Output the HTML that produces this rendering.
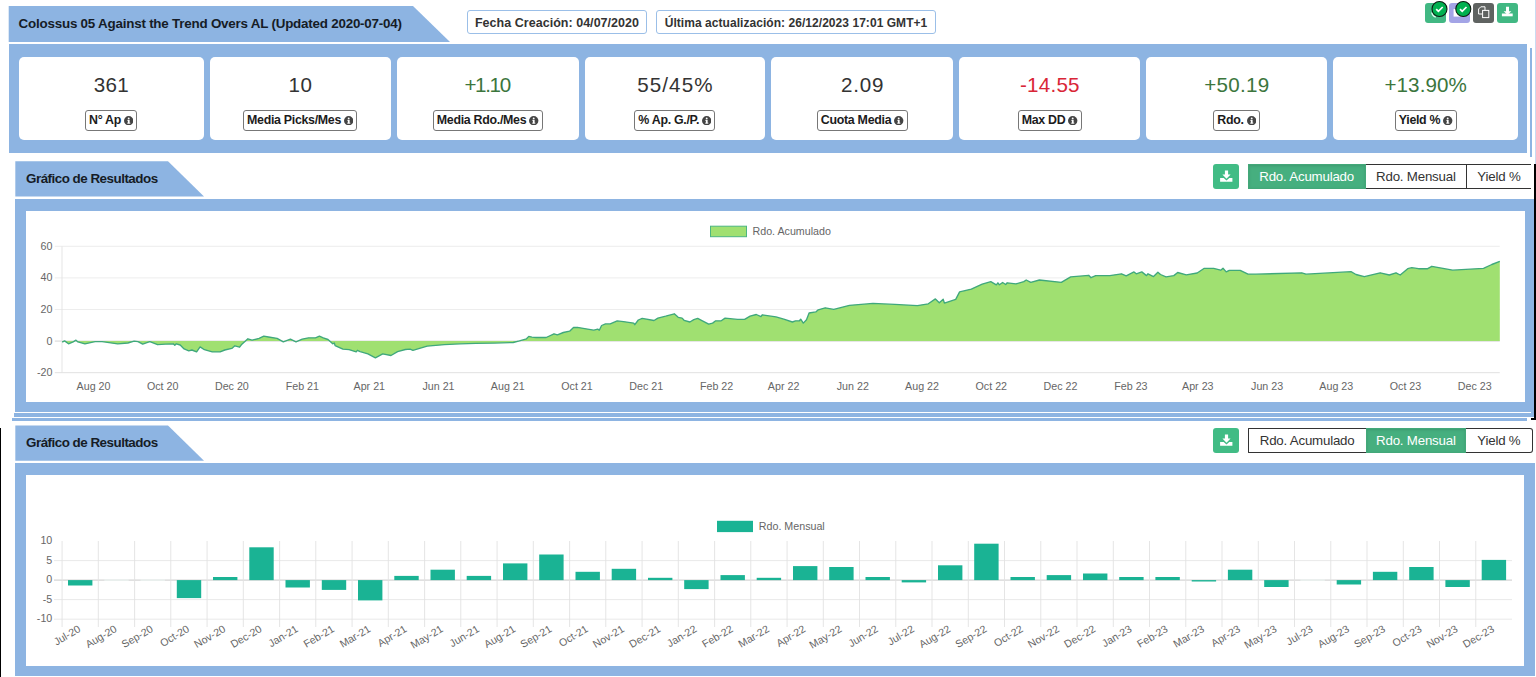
<!DOCTYPE html>
<html><head><meta charset="utf-8"><title>Colossus 05</title>
<style>
html,body{margin:0;padding:0;background:#fff;}
body{width:1536px;height:677px;position:relative;overflow:hidden;font-family:"Liberation Sans",sans-serif;color:#333;}
.abs{position:absolute;}
.blue{background:#8db4e2;}
.card{position:absolute;top:57px;height:83px;background:#fff;border-radius:5px;}
.num{position:absolute;left:0;right:0;top:16px;text-align:center;font-size:20.6px;line-height:24px;color:#333;letter-spacing:0.35px;}
.lblw{position:absolute;left:0;right:0;top:53px;text-align:center;height:20.5px;}
.lbl{display:inline-block;box-sizing:border-box;height:20.5px;border:1px solid #777;border-radius:3px;padding:0 3px;font-weight:bold;font-size:12.4px;line-height:19.4px;color:#1c1c1c;white-space:nowrap;letter-spacing:-0.3px;}
.lbl svg{vertical-align:-1px;margin-left:3px;}
.tabtxt{position:absolute;font-weight:bold;font-size:13.4px;color:#161c26;white-space:nowrap;letter-spacing:-0.22px;}
.pill{position:absolute;box-sizing:border-box;top:10.4px;height:24px;border:1px solid #9bbfe8;border-radius:3px;background:#fff;font-weight:bold;font-size:12px;line-height:24px;color:#333;text-align:center;white-space:nowrap;letter-spacing:-0.25px;}
.btn{position:absolute;box-sizing:border-box;height:25px;font-size:13.3px;line-height:23px;text-align:center;color:#333;background:#fff;border:1px solid #333;white-space:nowrap;letter-spacing:-0.2px;}
.btn.on{background:#46af7f;border-color:#43a879;color:#fff;box-shadow:inset 0 1px 3px rgba(0,0,0,.12);}
.gbtn{position:absolute;background:#41b883;border-radius:3px;}
svg text{font-family:"Liberation Sans",sans-serif;}
</style></head><body>

<svg class="abs" style="left:0;top:0" width="1536" height="677" viewBox="0 0 1536 677">
<polygon points="8.7,6 413,6 450,42 8.7,42" fill="#8db4e2"/>
<polygon points="15.3,161.3 168,161.3 204,196.6 15.3,196.6" fill="#8db4e2"/>
<polygon points="15.3,425.5 168,425.5 204,460.8 15.3,460.8" fill="#8db4e2"/>
</svg>
<div class="tabtxt" style="left:18.6px;top:16px;">Colossus 05 Against the Trend Overs AL (Updated 2020-07-04)</div>
<div class="tabtxt" style="left:26px;top:171px;letter-spacing:-0.5px;">Gráfico de Resultados</div>
<div class="tabtxt" style="left:26px;top:435px;letter-spacing:-0.5px;">Gráfico de Resultados</div>
<div class="pill" style="left:467px;width:180px;font-size:12.5px;letter-spacing:0.03px;">Fecha Creación: 04/07/2020</div>
<div class="pill" style="left:656px;width:280px;letter-spacing:0.05px;">Última actualización: 26/12/2023 17:01 GMT+1</div>
<div class="abs blue" style="left:8.7px;top:44px;width:1518.8px;height:109.4px;"></div>
<div class="abs blue" style="left:1530.1px;top:48.2px;width:1.8px;height:109px;"></div>
<div class="card" style="left:19px;width:184.5px;"><div class="num" style="color:#333"><span style="letter-spacing:0.25px;margin-right:-0.25px">361</span></div><div class="lblw"><span class="lbl">N° Ap<svg width="9.4" height="9.4" viewBox="0 0 16 16"><circle cx="8" cy="8" r="8" fill="#444"/><rect x="6.6" y="6.6" width="3" height="6" fill="#fff"/><rect x="5.6" y="6.6" width="2" height="1.4" fill="#fff"/><rect x="5.4" y="11.4" width="5.4" height="1.5" fill="#fff"/><circle cx="8" cy="4.1" r="1.6" fill="#fff"/></svg></span></div></div>
<div class="card" style="left:209.5px;width:181.5px;"><div class="num" style="color:#333"><span style="letter-spacing:0.35px;margin-right:-0.35px">10</span></div><div class="lblw"><span class="lbl">Media Picks/Mes<svg width="9.4" height="9.4" viewBox="0 0 16 16"><circle cx="8" cy="8" r="8" fill="#444"/><rect x="6.6" y="6.6" width="3" height="6" fill="#fff"/><rect x="5.6" y="6.6" width="2" height="1.4" fill="#fff"/><rect x="5.4" y="11.4" width="5.4" height="1.5" fill="#fff"/><circle cx="8" cy="4.1" r="1.6" fill="#fff"/></svg></span></div></div>
<div class="card" style="left:397px;width:181.5px;"><div class="num" style="color:#3c763d"><span style="letter-spacing:-1.35px;margin-right:1.35px">+1.10</span></div><div class="lblw"><span class="lbl">Media Rdo./Mes<svg width="9.4" height="9.4" viewBox="0 0 16 16"><circle cx="8" cy="8" r="8" fill="#444"/><rect x="6.6" y="6.6" width="3" height="6" fill="#fff"/><rect x="5.6" y="6.6" width="2" height="1.4" fill="#fff"/><rect x="5.4" y="11.4" width="5.4" height="1.5" fill="#fff"/><circle cx="8" cy="4.1" r="1.6" fill="#fff"/></svg></span></div></div>
<div class="card" style="left:584.5px;width:180.8px;"><div class="num" style="color:#333"><span style="letter-spacing:1.05px;margin-right:-1.05px">55/45%</span></div><div class="lblw"><span class="lbl">% Ap. G./P.<svg width="9.4" height="9.4" viewBox="0 0 16 16"><circle cx="8" cy="8" r="8" fill="#444"/><rect x="6.6" y="6.6" width="3" height="6" fill="#fff"/><rect x="5.6" y="6.6" width="2" height="1.4" fill="#fff"/><rect x="5.4" y="11.4" width="5.4" height="1.5" fill="#fff"/><circle cx="8" cy="4.1" r="1.6" fill="#fff"/></svg></span></div></div>
<div class="card" style="left:771.3px;width:181.9px;"><div class="num" style="color:#333"><span style="letter-spacing:0.8px;margin-right:-0.8px">2.09</span></div><div class="lblw"><span class="lbl">Cuota Media<svg width="9.4" height="9.4" viewBox="0 0 16 16"><circle cx="8" cy="8" r="8" fill="#444"/><rect x="6.6" y="6.6" width="3" height="6" fill="#fff"/><rect x="5.6" y="6.6" width="2" height="1.4" fill="#fff"/><rect x="5.4" y="11.4" width="5.4" height="1.5" fill="#fff"/><circle cx="8" cy="4.1" r="1.6" fill="#fff"/></svg></span></div></div>
<div class="card" style="left:959.2px;width:181.1px;"><div class="num" style="color:#d92637"><span style="letter-spacing:0.25px;margin-right:-0.25px">-14.55</span></div><div class="lblw"><span class="lbl">Max DD<svg width="9.4" height="9.4" viewBox="0 0 16 16"><circle cx="8" cy="8" r="8" fill="#444"/><rect x="6.6" y="6.6" width="3" height="6" fill="#fff"/><rect x="5.6" y="6.6" width="2" height="1.4" fill="#fff"/><rect x="5.4" y="11.4" width="5.4" height="1.5" fill="#fff"/><circle cx="8" cy="4.1" r="1.6" fill="#fff"/></svg></span></div></div>
<div class="card" style="left:1146px;width:181.4px;"><div class="num" style="color:#3c763d"><span style="letter-spacing:0.3px;margin-right:-0.3px">+50.19</span></div><div class="lblw"><span class="lbl">Rdo.<svg width="9.4" height="9.4" viewBox="0 0 16 16"><circle cx="8" cy="8" r="8" fill="#444"/><rect x="6.6" y="6.6" width="3" height="6" fill="#fff"/><rect x="5.6" y="6.6" width="2" height="1.4" fill="#fff"/><rect x="5.4" y="11.4" width="5.4" height="1.5" fill="#fff"/><circle cx="8" cy="4.1" r="1.6" fill="#fff"/></svg></span></div></div>
<div class="card" style="left:1333.4px;width:184.6px;"><div class="num" style="color:#3c763d"><span style="letter-spacing:0.1px;margin-right:-0.1px">+13.90%</span></div><div class="lblw"><span class="lbl">Yield %<svg width="9.4" height="9.4" viewBox="0 0 16 16"><circle cx="8" cy="8" r="8" fill="#444"/><rect x="6.6" y="6.6" width="3" height="6" fill="#fff"/><rect x="5.6" y="6.6" width="2" height="1.4" fill="#fff"/><rect x="5.4" y="11.4" width="5.4" height="1.5" fill="#fff"/><circle cx="8" cy="4.1" r="1.6" fill="#fff"/></svg></span></div></div>
<div class="gbtn" style="left:1425.3px;top:2.9px;width:20.5px;height:20px;background:#41b883;"></div>
<div class="gbtn" style="left:1448.8px;top:2.9px;width:20.8px;height:20px;background:#a3a4e6;"></div>
<div class="gbtn" style="left:1472.7px;top:2.9px;width:21.8px;height:20px;background:#5f6361;"></div>
<div class="gbtn" style="left:1496.7px;top:2.9px;width:21.2px;height:20px;background:#41b883;"></div>
<svg class="abs" style="left:1420px;top:0" width="110" height="30" viewBox="1420 0 110 30">
<rect x="1453.6" y="9" width="9" height="7.6" fill="#fff"/>
<path d="M1431.8 12.5 a5.5 5.5 0 0 0 4 4.6" fill="none" stroke="#e8fff4" stroke-width="1.4"/>
<circle cx="1439.5" cy="9" r="7.5" fill="#00b050" stroke="#0c1a10" stroke-width="1.1"/>
<circle cx="1463.3" cy="9" r="7.5" fill="#00b050" stroke="#0c1a10" stroke-width="1.1"/>
<path d="M1436.2 9.2 l2.2 2.2 l4.3 -4.4" fill="none" stroke="#fff" stroke-width="1.7"/>
<path d="M1460 9.2 l2.2 2.2 l4.3 -4.4" fill="none" stroke="#fff" stroke-width="1.7"/>
<g fill="none" stroke="#fff" stroke-width="1"><path d="M1478.6 9 l2.2-2.2 h4.2 v7.2 h-6.4z"/><rect x="1482.6" y="10.4" width="6.2" height="7.2" fill="#5f6361"/></g>
<g fill="#fff"><path d="M1506 6.8 h3 v4.4 h2.4 l-3.9 3.6 l-3.9-3.6 h2.4z"/><rect x="1501.9" y="13.5" width="10.8" height="2.8"/></g>
</svg>
<div class="gbtn" style="left:1213.2px;top:164.1px;width:26px;height:24.9px;background:#41bc85;"></div>
<svg class="abs" style="left:1213px;top:164px" width="27" height="25" viewBox="0 0 27 25"><g fill="#fff"><path d="M11.9 6.5 h3.2 v4 h2.5 l-4.1 4.2 l-4.1-4.2 h2.5z"/><path d="M7.1 14.1 h3.6 l2.8 2.3 l2.8-2.3 h3.1 v3.6 h-12.3z"/></g></svg>
<div class="btn on" style="left:1247.7px;top:164px;width:117.9px;">Rdo. Acumulado</div>
<div class="btn" style="left:1365.6px;top:164px;width:100.6px;border-left:0;border-right:0;">Rdo. Mensual</div>
<div class="btn" style="left:1466.2px;top:164px;width:66.4px;border-right:0;width:64.5px;">Yield %</div>
<div class="gbtn" style="left:1213.2px;top:428.1px;width:26px;height:24.9px;background:#41bc85;"></div>
<svg class="abs" style="left:1213px;top:428px" width="27" height="25" viewBox="0 0 27 25"><g fill="#fff"><path d="M11.9 6.5 h3.2 v4 h2.5 l-4.1 4.2 l-4.1-4.2 h2.5z"/><path d="M7.1 14.1 h3.6 l2.8 2.3 l2.8-2.3 h3.1 v3.6 h-12.3z"/></g></svg>
<div class="btn" style="left:1247.7px;top:428px;width:117.9px;border-right:0;border-radius:1px 0 0 1px;">Rdo. Acumulado</div>
<div class="btn on" style="left:1365.6px;top:428px;width:100.6px;">Rdo. Mensual</div>
<div class="btn" style="left:1466.2px;top:428px;width:66.4px;border-left:0;border-radius:0 3px 3px 0;">Yield %</div>
<div class="abs blue" style="left:15.3px;top:198.5px;width:1518.3px;height:213.3px;"></div>
<div class="abs" style="left:26px;top:210.8px;width:1499px;height:191.2px;background:#fff;"></div>
<div class="abs blue" style="left:13.6px;top:413px;width:1520.0px;height:3.6px;"></div>
<div class="abs blue" style="left:11.8px;top:417.8px;width:1515.6000000000001px;height:3px;"></div>
<div class="abs blue" style="left:15.3px;top:463px;width:1519.7px;height:212.60000000000002px;"></div>
<div class="abs" style="left:26px;top:475px;width:1498.4px;height:191.20000000000005px;background:#fff;"></div>
<div class="abs blue" style="left:1531px;top:411px;width:2.6px;height:3px;"></div>
<div class="abs" style="left:1535px;top:0;width:1px;height:164px;background:#c9dbf2;"></div>
<div class="abs" style="left:0;top:428px;width:1.2px;height:249px;background:#000;"></div>
<div class="abs" style="left:1534px;top:164px;width:2px;height:256px;background:#000;"></div>
<div class="abs" style="left:1531px;top:417.7px;width:5px;height:2.1px;background:#000;"></div>
<svg class="abs" style="left:0;top:0" width="1536" height="677" viewBox="0 0 1536 677">
<line x1="54.8" x2="1499.8" y1="246.3" y2="246.3" stroke="#ebebeb" stroke-width="0.9"/>
<text x="52.5" y="249.8" font-size="10.7" fill="#666" text-anchor="end">60</text>
<line x1="54.8" x2="1499.8" y1="277.9" y2="277.9" stroke="#ebebeb" stroke-width="0.9"/>
<text x="52.5" y="281.4" font-size="10.7" fill="#666" text-anchor="end">40</text>
<line x1="54.8" x2="1499.8" y1="309.5" y2="309.5" stroke="#ebebeb" stroke-width="0.9"/>
<text x="52.5" y="313.0" font-size="10.7" fill="#666" text-anchor="end">20</text>
<line x1="54.8" x2="1499.8" y1="341.1" y2="341.1" stroke="#d0d0d0" stroke-width="0.9"/>
<text x="52.5" y="344.6" font-size="10.7" fill="#666" text-anchor="end">0</text>
<line x1="54.8" x2="1499.8" y1="372.7" y2="372.7" stroke="#dedede" stroke-width="0.9"/>
<text x="52.5" y="376.2" font-size="10.7" fill="#666" text-anchor="end">-20</text>
<line x1="62" x2="62" y1="246.3" y2="372.7" stroke="#e2e2e2" stroke-width="0.9"/>
<path d="M62.2,342.2 L64.6,340.9 L68.5,343.8 L73.2,341.9 L76.0,340.2 L77.9,341.9 L84.9,343.9 L95.1,341.6 L102.1,341.6 L109.1,342.7 L117.7,343.9 L127.9,343.0 L134.1,341.1 L138.0,341.6 L142.7,344.1 L149.8,341.7 L157.6,344.7 L165.4,344.2 L173.2,343.8 L174.8,345.3 L176.3,343.8 L180.2,345.0 L184.1,348.9 L188.8,350.8 L191.9,350.0 L196.6,351.9 L200.1,346.9 L204.4,349.7 L212.2,351.9 L220.1,351.9 L224.8,350.0 L231.8,348.4 L234.9,345.8 L239.6,347.2 L241.9,344.2 L247.9,338.8 L252.1,340.2 L259.1,338.3 L263.8,336.2 L268.5,337.0 L277.1,338.3 L283.3,341.9 L290.4,339.1 L296.0,341.9 L302.2,339.1 L308.5,337.8 L315.5,337.8 L319.4,336.2 L323.3,337.8 L328.0,339.5 L332.7,343.8 L334.3,343.0 L335.1,345.6 L342.9,349.2 L349.1,349.7 L356.2,351.9 L357.4,350.3 L360.1,351.6 L367.9,353.9 L375.4,357.8 L382.7,353.9 L391.0,355.5 L397.6,351.6 L405.4,349.5 L410.1,349.2 L412.9,350.3 L427.2,346.2 L444.4,344.7 L460.1,343.8 L475.7,343.3 L494.4,343.1 L513.2,342.5 L519.4,340.9 L526.5,338.8 L528.8,336.4 L531.9,337.2 L536.0,337.5 L546.2,337.5 L554.0,333.8 L557.4,334.8 L563.3,332.5 L569.6,331.2 L573.5,327.5 L577.4,327.3 L587.6,329.1 L593.8,330.2 L597.7,329.1 L599.3,330.2 L601.6,325.5 L605.5,323.9 L610.2,323.9 L617.2,320.9 L623.5,321.6 L633.7,323.1 L634.8,324.7 L638.3,320.0 L642.2,318.4 L654.0,320.5 L657.9,318.1 L665.7,316.2 L674.3,313.8 L678.2,317.3 L682.1,318.1 L684.1,320.3 L689.9,322.0 L693.8,319.7 L697.7,318.4 L702.4,320.9 L708.7,324.2 L712.6,323.1 L715.7,320.8 L721.2,320.8 L725.1,318.1 L737.6,319.4 L744.6,319.4 L750.1,316.1 L756.3,314.5 L761.0,316.6 L762.2,314.8 L776.0,316.9 L783.8,319.2 L792.4,322.0 L795.5,320.8 L799.4,320.8 L800.7,319.2 L803.3,323.1 L806.5,319.7 L809.1,313.0 L815.8,311.9 L818.2,309.8 L825.2,307.8 L833.8,309.4 L849.4,305.3 L872.9,303.4 L894.8,304.4 L917.4,305.6 L928.3,303.8 L935.4,298.9 L939.3,302.8 L943.2,299.2 L944.4,303.1 L955.7,299.4 L959.6,291.9 L971.3,289.1 L982.2,284.1 L990.8,281.7 L996.3,284.8 L997.9,282.8 L999.4,284.8 L1002.6,282.5 L1005.7,284.5 L1007.2,282.8 L1016.0,283.9 L1023.8,281.6 L1026.2,280.0 L1030.8,282.3 L1039.4,280.0 L1061.3,282.3 L1070.7,276.9 L1088.7,275.3 L1091.0,277.7 L1095.7,275.6 L1109.8,275.6 L1121.5,273.8 L1126.2,275.8 L1134.0,271.9 L1136.3,273.8 L1141.8,271.9 L1146.5,275.6 L1148.0,273.8 L1153.5,276.6 L1157.9,272.2 L1160.5,274.5 L1166.0,276.9 L1173.8,275.6 L1177.7,272.5 L1186.3,274.8 L1197.2,273.0 L1204.3,268.3 L1213.7,268.3 L1220.7,270.2 L1223.0,268.3 L1226.2,271.9 L1229.3,270.3 L1240.2,270.3 L1248.0,274.1 L1256.0,274.2 L1301.8,272.8 L1306.0,274.2 L1351.0,271.7 L1356.0,274.5 L1364.3,276.7 L1380.2,272.8 L1389.3,275.0 L1396.0,272.8 L1400.2,275.0 L1407.7,268.7 L1411.8,267.7 L1418.5,268.7 L1427.7,268.7 L1431.8,266.3 L1452.7,270.2 L1483.5,268.3 L1491.8,264.5 L1499.8,261.3 L1499.8,341.1 L62.2,341.1 Z" fill="#a0e071"/>
<path d="M62.2,342.2 L64.6,340.9 L68.5,343.8 L73.2,341.9 L76.0,340.2 L77.9,341.9 L84.9,343.9 L95.1,341.6 L102.1,341.6 L109.1,342.7 L117.7,343.9 L127.9,343.0 L134.1,341.1 L138.0,341.6 L142.7,344.1 L149.8,341.7 L157.6,344.7 L165.4,344.2 L173.2,343.8 L174.8,345.3 L176.3,343.8 L180.2,345.0 L184.1,348.9 L188.8,350.8 L191.9,350.0 L196.6,351.9 L200.1,346.9 L204.4,349.7 L212.2,351.9 L220.1,351.9 L224.8,350.0 L231.8,348.4 L234.9,345.8 L239.6,347.2 L241.9,344.2 L247.9,338.8 L252.1,340.2 L259.1,338.3 L263.8,336.2 L268.5,337.0 L277.1,338.3 L283.3,341.9 L290.4,339.1 L296.0,341.9 L302.2,339.1 L308.5,337.8 L315.5,337.8 L319.4,336.2 L323.3,337.8 L328.0,339.5 L332.7,343.8 L334.3,343.0 L335.1,345.6 L342.9,349.2 L349.1,349.7 L356.2,351.9 L357.4,350.3 L360.1,351.6 L367.9,353.9 L375.4,357.8 L382.7,353.9 L391.0,355.5 L397.6,351.6 L405.4,349.5 L410.1,349.2 L412.9,350.3 L427.2,346.2 L444.4,344.7 L460.1,343.8 L475.7,343.3 L494.4,343.1 L513.2,342.5 L519.4,340.9 L526.5,338.8 L528.8,336.4 L531.9,337.2 L536.0,337.5 L546.2,337.5 L554.0,333.8 L557.4,334.8 L563.3,332.5 L569.6,331.2 L573.5,327.5 L577.4,327.3 L587.6,329.1 L593.8,330.2 L597.7,329.1 L599.3,330.2 L601.6,325.5 L605.5,323.9 L610.2,323.9 L617.2,320.9 L623.5,321.6 L633.7,323.1 L634.8,324.7 L638.3,320.0 L642.2,318.4 L654.0,320.5 L657.9,318.1 L665.7,316.2 L674.3,313.8 L678.2,317.3 L682.1,318.1 L684.1,320.3 L689.9,322.0 L693.8,319.7 L697.7,318.4 L702.4,320.9 L708.7,324.2 L712.6,323.1 L715.7,320.8 L721.2,320.8 L725.1,318.1 L737.6,319.4 L744.6,319.4 L750.1,316.1 L756.3,314.5 L761.0,316.6 L762.2,314.8 L776.0,316.9 L783.8,319.2 L792.4,322.0 L795.5,320.8 L799.4,320.8 L800.7,319.2 L803.3,323.1 L806.5,319.7 L809.1,313.0 L815.8,311.9 L818.2,309.8 L825.2,307.8 L833.8,309.4 L849.4,305.3 L872.9,303.4 L894.8,304.4 L917.4,305.6 L928.3,303.8 L935.4,298.9 L939.3,302.8 L943.2,299.2 L944.4,303.1 L955.7,299.4 L959.6,291.9 L971.3,289.1 L982.2,284.1 L990.8,281.7 L996.3,284.8 L997.9,282.8 L999.4,284.8 L1002.6,282.5 L1005.7,284.5 L1007.2,282.8 L1016.0,283.9 L1023.8,281.6 L1026.2,280.0 L1030.8,282.3 L1039.4,280.0 L1061.3,282.3 L1070.7,276.9 L1088.7,275.3 L1091.0,277.7 L1095.7,275.6 L1109.8,275.6 L1121.5,273.8 L1126.2,275.8 L1134.0,271.9 L1136.3,273.8 L1141.8,271.9 L1146.5,275.6 L1148.0,273.8 L1153.5,276.6 L1157.9,272.2 L1160.5,274.5 L1166.0,276.9 L1173.8,275.6 L1177.7,272.5 L1186.3,274.8 L1197.2,273.0 L1204.3,268.3 L1213.7,268.3 L1220.7,270.2 L1223.0,268.3 L1226.2,271.9 L1229.3,270.3 L1240.2,270.3 L1248.0,274.1 L1256.0,274.2 L1301.8,272.8 L1306.0,274.2 L1351.0,271.7 L1356.0,274.5 L1364.3,276.7 L1380.2,272.8 L1389.3,275.0 L1396.0,272.8 L1400.2,275.0 L1407.7,268.7 L1411.8,267.7 L1418.5,268.7 L1427.7,268.7 L1431.8,266.3 L1452.7,270.2 L1483.5,268.3 L1491.8,264.5 L1499.8,261.3" fill="none" stroke="#3fa87c" stroke-width="1.35" stroke-linejoin="round"/>
<text x="93.5" y="389.7" font-size="10.7" fill="#666" text-anchor="middle">Aug 20</text>
<text x="162.7" y="389.7" font-size="10.7" fill="#666" text-anchor="middle">Oct 20</text>
<text x="231.9" y="389.7" font-size="10.7" fill="#666" text-anchor="middle">Dec 20</text>
<text x="302.3" y="389.7" font-size="10.7" fill="#666" text-anchor="middle">Feb 21</text>
<text x="369.3" y="389.7" font-size="10.7" fill="#666" text-anchor="middle">Apr 21</text>
<text x="438.5" y="389.7" font-size="10.7" fill="#666" text-anchor="middle">Jun 21</text>
<text x="507.8" y="389.7" font-size="10.7" fill="#666" text-anchor="middle">Aug 21</text>
<text x="577.0" y="389.7" font-size="10.7" fill="#666" text-anchor="middle">Oct 21</text>
<text x="646.2" y="389.7" font-size="10.7" fill="#666" text-anchor="middle">Dec 21</text>
<text x="716.6" y="389.7" font-size="10.7" fill="#666" text-anchor="middle">Feb 22</text>
<text x="783.6" y="389.7" font-size="10.7" fill="#666" text-anchor="middle">Apr 22</text>
<text x="852.8" y="389.7" font-size="10.7" fill="#666" text-anchor="middle">Jun 22</text>
<text x="922.0" y="389.7" font-size="10.7" fill="#666" text-anchor="middle">Aug 22</text>
<text x="991.3" y="389.7" font-size="10.7" fill="#666" text-anchor="middle">Oct 22</text>
<text x="1060.5" y="389.7" font-size="10.7" fill="#666" text-anchor="middle">Dec 22</text>
<text x="1130.9" y="389.7" font-size="10.7" fill="#666" text-anchor="middle">Feb 23</text>
<text x="1197.8" y="389.7" font-size="10.7" fill="#666" text-anchor="middle">Apr 23</text>
<text x="1267.1" y="389.7" font-size="10.7" fill="#666" text-anchor="middle">Jun 23</text>
<text x="1336.3" y="389.7" font-size="10.7" fill="#666" text-anchor="middle">Aug 23</text>
<text x="1405.5" y="389.7" font-size="10.7" fill="#666" text-anchor="middle">Oct 23</text>
<text x="1474.8" y="389.7" font-size="10.7" fill="#666" text-anchor="middle">Dec 23</text>
<rect x="710.5" y="226.2" width="36" height="10.5" fill="#a0e071" stroke="#4cb581" stroke-width="1"/>
<text x="752.5" y="235.3" font-size="10.7" fill="#666">Rdo. Acumulado</text>
<text x="52.3" y="544.1" font-size="10.7" fill="#666" text-anchor="end">10</text>
<line x1="54" x2="1512.0" y1="560.6" y2="560.6" stroke="#e6e6e6" stroke-width="0.9"/>
<text x="52.3" y="563.7" font-size="10.7" fill="#666" text-anchor="end">5</text>
<line x1="54" x2="1512.0" y1="580.1" y2="580.1" stroke="#c4c4c4" stroke-width="0.9"/>
<text x="52.3" y="583.2" font-size="10.7" fill="#666" text-anchor="end">0</text>
<line x1="54" x2="1512.0" y1="599.6" y2="599.6" stroke="#e6e6e6" stroke-width="0.9"/>
<text x="52.3" y="602.8" font-size="10.7" fill="#666" text-anchor="end">-5</text>
<line x1="54" x2="1512.0" y1="619.2" y2="619.2" stroke="#e6e6e6" stroke-width="0.9"/>
<text x="52.3" y="622.3" font-size="10.7" fill="#666" text-anchor="end">-10</text>
<line x1="62.1" x2="62.1" y1="541" y2="627" stroke="#e2e2e2" stroke-width="0.9"/>
<line x1="98.3" x2="98.3" y1="541" y2="627" stroke="#e2e2e2" stroke-width="0.9"/>
<line x1="134.6" x2="134.6" y1="541" y2="627" stroke="#e2e2e2" stroke-width="0.9"/>
<line x1="170.8" x2="170.8" y1="541" y2="627" stroke="#e2e2e2" stroke-width="0.9"/>
<line x1="207.1" x2="207.1" y1="541" y2="627" stroke="#e2e2e2" stroke-width="0.9"/>
<line x1="243.3" x2="243.3" y1="541" y2="627" stroke="#e2e2e2" stroke-width="0.9"/>
<line x1="279.6" x2="279.6" y1="541" y2="627" stroke="#e2e2e2" stroke-width="0.9"/>
<line x1="315.8" x2="315.8" y1="541" y2="627" stroke="#e2e2e2" stroke-width="0.9"/>
<line x1="352.1" x2="352.1" y1="541" y2="627" stroke="#e2e2e2" stroke-width="0.9"/>
<line x1="388.3" x2="388.3" y1="541" y2="627" stroke="#e2e2e2" stroke-width="0.9"/>
<line x1="424.6" x2="424.6" y1="541" y2="627" stroke="#e2e2e2" stroke-width="0.9"/>
<line x1="460.8" x2="460.8" y1="541" y2="627" stroke="#e2e2e2" stroke-width="0.9"/>
<line x1="497.1" x2="497.1" y1="541" y2="627" stroke="#e2e2e2" stroke-width="0.9"/>
<line x1="533.3" x2="533.3" y1="541" y2="627" stroke="#e2e2e2" stroke-width="0.9"/>
<line x1="569.6" x2="569.6" y1="541" y2="627" stroke="#e2e2e2" stroke-width="0.9"/>
<line x1="605.8" x2="605.8" y1="541" y2="627" stroke="#e2e2e2" stroke-width="0.9"/>
<line x1="642.1" x2="642.1" y1="541" y2="627" stroke="#e2e2e2" stroke-width="0.9"/>
<line x1="678.3" x2="678.3" y1="541" y2="627" stroke="#e2e2e2" stroke-width="0.9"/>
<line x1="714.6" x2="714.6" y1="541" y2="627" stroke="#e2e2e2" stroke-width="0.9"/>
<line x1="750.8" x2="750.8" y1="541" y2="627" stroke="#e2e2e2" stroke-width="0.9"/>
<line x1="787.1" x2="787.1" y1="541" y2="627" stroke="#e2e2e2" stroke-width="0.9"/>
<line x1="823.3" x2="823.3" y1="541" y2="627" stroke="#e2e2e2" stroke-width="0.9"/>
<line x1="859.5" x2="859.5" y1="541" y2="627" stroke="#e2e2e2" stroke-width="0.9"/>
<line x1="895.8" x2="895.8" y1="541" y2="627" stroke="#e2e2e2" stroke-width="0.9"/>
<line x1="932.0" x2="932.0" y1="541" y2="627" stroke="#e2e2e2" stroke-width="0.9"/>
<line x1="968.3" x2="968.3" y1="541" y2="627" stroke="#e2e2e2" stroke-width="0.9"/>
<line x1="1004.5" x2="1004.5" y1="541" y2="627" stroke="#e2e2e2" stroke-width="0.9"/>
<line x1="1040.8" x2="1040.8" y1="541" y2="627" stroke="#e2e2e2" stroke-width="0.9"/>
<line x1="1077.0" x2="1077.0" y1="541" y2="627" stroke="#e2e2e2" stroke-width="0.9"/>
<line x1="1113.3" x2="1113.3" y1="541" y2="627" stroke="#e2e2e2" stroke-width="0.9"/>
<line x1="1149.5" x2="1149.5" y1="541" y2="627" stroke="#e2e2e2" stroke-width="0.9"/>
<line x1="1185.8" x2="1185.8" y1="541" y2="627" stroke="#e2e2e2" stroke-width="0.9"/>
<line x1="1222.0" x2="1222.0" y1="541" y2="627" stroke="#e2e2e2" stroke-width="0.9"/>
<line x1="1258.3" x2="1258.3" y1="541" y2="627" stroke="#e2e2e2" stroke-width="0.9"/>
<line x1="1294.5" x2="1294.5" y1="541" y2="627" stroke="#e2e2e2" stroke-width="0.9"/>
<line x1="1330.8" x2="1330.8" y1="541" y2="627" stroke="#e2e2e2" stroke-width="0.9"/>
<line x1="1367.0" x2="1367.0" y1="541" y2="627" stroke="#e2e2e2" stroke-width="0.9"/>
<line x1="1403.3" x2="1403.3" y1="541" y2="627" stroke="#e2e2e2" stroke-width="0.9"/>
<line x1="1439.5" x2="1439.5" y1="541" y2="627" stroke="#e2e2e2" stroke-width="0.9"/>
<line x1="1475.8" x2="1475.8" y1="541" y2="627" stroke="#e2e2e2" stroke-width="0.9"/>
<rect x="68.0" y="580.1" width="24.4" height="5.4" fill="#1ab394"/>
<rect x="104.3" y="579.6" width="24.4" height="1" fill="#eef8f5"/>
<rect x="140.5" y="579.6" width="24.4" height="1" fill="#eef8f5"/>
<rect x="176.8" y="580.1" width="24.4" height="18.0" fill="#1ab394"/>
<rect x="213.0" y="577.0" width="24.4" height="3.1" fill="#1ab394"/>
<rect x="249.3" y="547.3" width="24.4" height="32.8" fill="#1ab394"/>
<rect x="285.5" y="580.1" width="24.4" height="7.4" fill="#1ab394"/>
<rect x="321.8" y="580.1" width="24.4" height="9.8" fill="#1ab394"/>
<rect x="358.0" y="580.1" width="24.4" height="20.3" fill="#1ab394"/>
<rect x="394.3" y="575.9" width="24.4" height="4.2" fill="#1ab394"/>
<rect x="430.5" y="569.7" width="24.4" height="10.4" fill="#1ab394"/>
<rect x="466.7" y="575.9" width="24.4" height="4.2" fill="#1ab394"/>
<rect x="503.0" y="563.4" width="24.4" height="16.7" fill="#1ab394"/>
<rect x="539.2" y="554.5" width="24.4" height="25.6" fill="#1ab394"/>
<rect x="575.5" y="571.8" width="24.4" height="8.3" fill="#1ab394"/>
<rect x="611.7" y="568.8" width="24.4" height="11.3" fill="#1ab394"/>
<rect x="648.0" y="577.8" width="24.4" height="2.3" fill="#1ab394"/>
<rect x="684.2" y="580.1" width="24.4" height="9.0" fill="#1ab394"/>
<rect x="720.5" y="575.1" width="24.4" height="5.0" fill="#1ab394"/>
<rect x="756.7" y="577.8" width="24.4" height="2.3" fill="#1ab394"/>
<rect x="793.0" y="566.1" width="24.4" height="14.0" fill="#1ab394"/>
<rect x="829.2" y="567.0" width="24.4" height="13.1" fill="#1ab394"/>
<rect x="865.5" y="577.0" width="24.4" height="3.1" fill="#1ab394"/>
<rect x="901.7" y="580.1" width="24.4" height="2.3" fill="#1ab394"/>
<rect x="938.0" y="565.3" width="24.4" height="14.8" fill="#1ab394"/>
<rect x="974.2" y="543.7" width="24.4" height="36.4" fill="#1ab394"/>
<rect x="1010.5" y="577.0" width="24.4" height="3.1" fill="#1ab394"/>
<rect x="1046.7" y="575.1" width="24.4" height="5.0" fill="#1ab394"/>
<rect x="1083.0" y="573.5" width="24.4" height="6.6" fill="#1ab394"/>
<rect x="1119.2" y="577.0" width="24.4" height="3.1" fill="#1ab394"/>
<rect x="1155.4" y="577.0" width="24.4" height="3.1" fill="#1ab394"/>
<rect x="1191.7" y="580.1" width="24.4" height="1.4" fill="#1ab394"/>
<rect x="1227.9" y="569.7" width="24.4" height="10.4" fill="#1ab394"/>
<rect x="1264.2" y="580.1" width="24.4" height="6.9" fill="#1ab394"/>
<rect x="1300.4" y="579.6" width="24.4" height="1" fill="#eef8f5"/>
<rect x="1336.7" y="580.1" width="24.4" height="4.4" fill="#1ab394"/>
<rect x="1372.9" y="571.8" width="24.4" height="8.3" fill="#1ab394"/>
<rect x="1409.2" y="567.0" width="24.4" height="13.1" fill="#1ab394"/>
<rect x="1445.4" y="580.1" width="24.4" height="6.9" fill="#1ab394"/>
<rect x="1481.7" y="559.9" width="24.4" height="20.2" fill="#1ab394"/>
<text transform="translate(81.3,631) rotate(-30.5)" font-size="10.6" fill="#666" text-anchor="end">Jul-20</text>
<text transform="translate(117.6,631) rotate(-30.5)" font-size="10.6" fill="#666" text-anchor="end">Aug-20</text>
<text transform="translate(153.8,631) rotate(-30.5)" font-size="10.6" fill="#666" text-anchor="end">Sep-20</text>
<text transform="translate(190.1,631) rotate(-30.5)" font-size="10.6" fill="#666" text-anchor="end">Oct-20</text>
<text transform="translate(226.3,631) rotate(-30.5)" font-size="10.6" fill="#666" text-anchor="end">Nov-20</text>
<text transform="translate(262.6,631) rotate(-30.5)" font-size="10.6" fill="#666" text-anchor="end">Dec-20</text>
<text transform="translate(298.8,631) rotate(-30.5)" font-size="10.6" fill="#666" text-anchor="end">Jan-21</text>
<text transform="translate(335.1,631) rotate(-30.5)" font-size="10.6" fill="#666" text-anchor="end">Feb-21</text>
<text transform="translate(371.3,631) rotate(-30.5)" font-size="10.6" fill="#666" text-anchor="end">Mar-21</text>
<text transform="translate(407.6,631) rotate(-30.5)" font-size="10.6" fill="#666" text-anchor="end">Apr-21</text>
<text transform="translate(443.8,631) rotate(-30.5)" font-size="10.6" fill="#666" text-anchor="end">May-21</text>
<text transform="translate(480.0,631) rotate(-30.5)" font-size="10.6" fill="#666" text-anchor="end">Jun-21</text>
<text transform="translate(516.3,631) rotate(-30.5)" font-size="10.6" fill="#666" text-anchor="end">Aug-21</text>
<text transform="translate(552.5,631) rotate(-30.5)" font-size="10.6" fill="#666" text-anchor="end">Sep-21</text>
<text transform="translate(588.8,631) rotate(-30.5)" font-size="10.6" fill="#666" text-anchor="end">Oct-21</text>
<text transform="translate(625.0,631) rotate(-30.5)" font-size="10.6" fill="#666" text-anchor="end">Nov-21</text>
<text transform="translate(661.3,631) rotate(-30.5)" font-size="10.6" fill="#666" text-anchor="end">Dec-21</text>
<text transform="translate(697.5,631) rotate(-30.5)" font-size="10.6" fill="#666" text-anchor="end">Jan-22</text>
<text transform="translate(733.8,631) rotate(-30.5)" font-size="10.6" fill="#666" text-anchor="end">Feb-22</text>
<text transform="translate(770.0,631) rotate(-30.5)" font-size="10.6" fill="#666" text-anchor="end">Mar-22</text>
<text transform="translate(806.3,631) rotate(-30.5)" font-size="10.6" fill="#666" text-anchor="end">Apr-22</text>
<text transform="translate(842.5,631) rotate(-30.5)" font-size="10.6" fill="#666" text-anchor="end">May-22</text>
<text transform="translate(878.8,631) rotate(-30.5)" font-size="10.6" fill="#666" text-anchor="end">Jun-22</text>
<text transform="translate(915.0,631) rotate(-30.5)" font-size="10.6" fill="#666" text-anchor="end">Jul-22</text>
<text transform="translate(951.3,631) rotate(-30.5)" font-size="10.6" fill="#666" text-anchor="end">Aug-22</text>
<text transform="translate(987.5,631) rotate(-30.5)" font-size="10.6" fill="#666" text-anchor="end">Sep-22</text>
<text transform="translate(1023.8,631) rotate(-30.5)" font-size="10.6" fill="#666" text-anchor="end">Oct-22</text>
<text transform="translate(1060.0,631) rotate(-30.5)" font-size="10.6" fill="#666" text-anchor="end">Nov-22</text>
<text transform="translate(1096.3,631) rotate(-30.5)" font-size="10.6" fill="#666" text-anchor="end">Dec-22</text>
<text transform="translate(1132.5,631) rotate(-30.5)" font-size="10.6" fill="#666" text-anchor="end">Jan-23</text>
<text transform="translate(1168.7,631) rotate(-30.5)" font-size="10.6" fill="#666" text-anchor="end">Feb-23</text>
<text transform="translate(1205.0,631) rotate(-30.5)" font-size="10.6" fill="#666" text-anchor="end">Mar-23</text>
<text transform="translate(1241.2,631) rotate(-30.5)" font-size="10.6" fill="#666" text-anchor="end">Apr-23</text>
<text transform="translate(1277.5,631) rotate(-30.5)" font-size="10.6" fill="#666" text-anchor="end">May-23</text>
<text transform="translate(1313.7,631) rotate(-30.5)" font-size="10.6" fill="#666" text-anchor="end">Jul-23</text>
<text transform="translate(1350.0,631) rotate(-30.5)" font-size="10.6" fill="#666" text-anchor="end">Aug-23</text>
<text transform="translate(1386.2,631) rotate(-30.5)" font-size="10.6" fill="#666" text-anchor="end">Sep-23</text>
<text transform="translate(1422.5,631) rotate(-30.5)" font-size="10.6" fill="#666" text-anchor="end">Oct-23</text>
<text transform="translate(1458.7,631) rotate(-30.5)" font-size="10.6" fill="#666" text-anchor="end">Nov-23</text>
<text transform="translate(1495.0,631) rotate(-30.5)" font-size="10.6" fill="#666" text-anchor="end">Dec-23</text>
<rect x="717" y="520.8" width="36" height="11.3" fill="#1ab394"/>
<text x="758.8" y="530.3" font-size="10.7" fill="#666">Rdo. Mensual</text>
</svg>
</body></html>
